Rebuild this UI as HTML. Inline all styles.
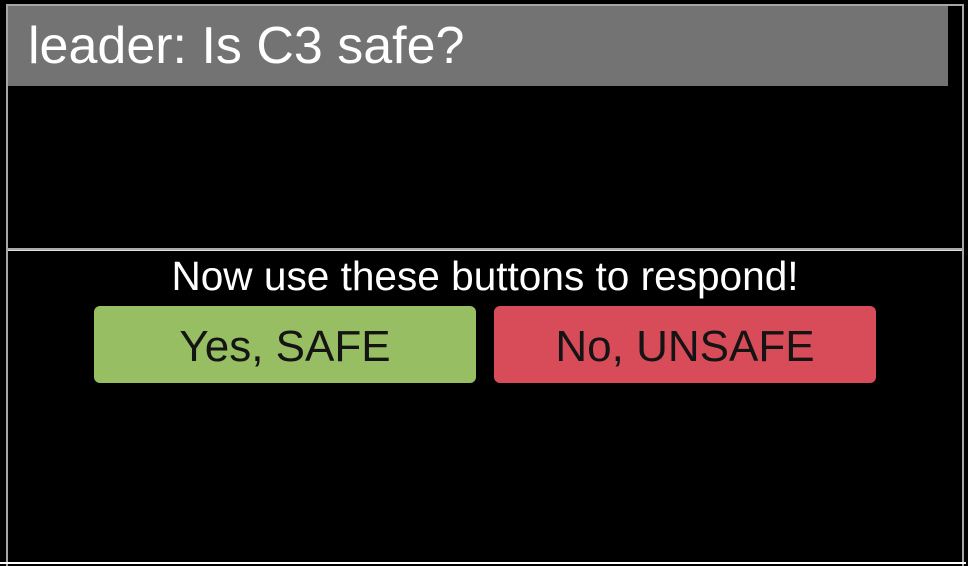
<!DOCTYPE html>
<html><head><style>
html,body{margin:0;padding:0;background:#000;width:968px;height:566px;overflow:hidden;font-family:"Liberation Sans",Arial,sans-serif;}
.box{position:absolute;left:6px;top:4px;width:954px;height:560px;border:2px solid #a6a6a6;border-bottom:none;}
.hdr{position:absolute;left:8px;top:6px;width:940px;height:80px;background:#737373;color:#fff;font-size:52px;line-height:80px;box-sizing:border-box;padding-left:20px;white-space:nowrap;}
.sep{position:absolute;left:8px;top:248px;width:954px;height:2px;background:#aaa;}
.sep2{position:absolute;left:8px;top:250px;width:954px;height:1px;background:#ddd;}
.msg{position:absolute;left:8px;width:954px;top:252px;text-align:center;color:#fff;font-size:40.6px;line-height:48px;white-space:nowrap;}
.btn{position:absolute;top:306px;width:382px;height:77px;border-radius:6px;text-align:center;line-height:81px;font-size:44px;color:#141414;white-space:nowrap;}
.g{left:94px;background:#97be62;}
.r{left:494px;background:#d84b59;}
.bot{position:absolute;left:0;top:562px;width:966px;height:2px;background:#fff;}
</style></head><body>
<div class="box"></div>
<div class="hdr">leader: Is C3 safe?</div>
<div class="sep"></div><div class="sep2"></div>
<div class="msg">Now use these buttons to respond!</div>
<div class="btn g">Yes, SAFE</div>
<div class="btn r">No, UNSAFE</div>
<div class="bot"></div>
</body></html>
